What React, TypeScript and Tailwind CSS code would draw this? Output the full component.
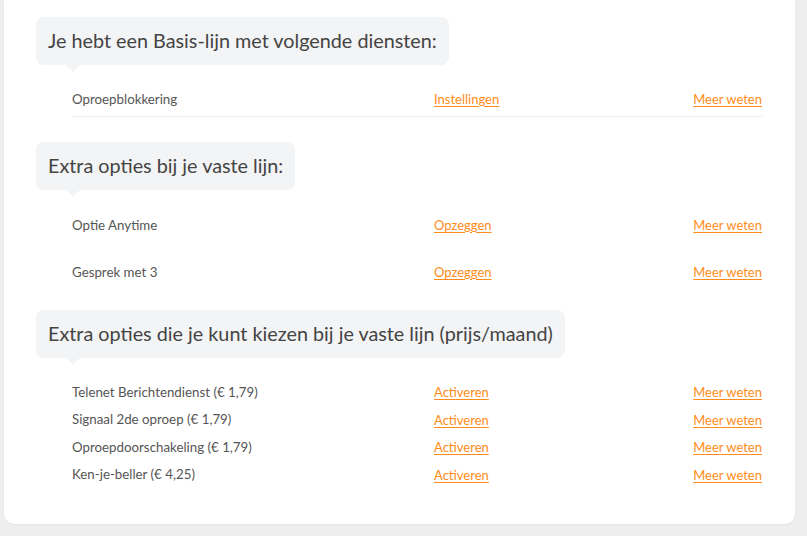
import React from 'react';

type Row = { label: string; action: string };

const basis: Row[] = [{ label: 'Oproepblokkering', action: 'Instellingen' }];
const extra: Row[] = [
  { label: 'Optie Anytime', action: 'Opzeggen' },
  { label: 'Gesprek met 3', action: 'Opzeggen' },
];
const kiezen: Row[] = [
  { label: 'Telenet Berichtendienst (€ 1,79)', action: 'Activeren' },
  { label: 'Signaal 2de oproep (€ 1,79)', action: 'Activeren' },
  { label: 'Oproepdoorschakeling (€ 1,79)', action: 'Activeren' },
  { label: 'Ken-je-beller (€ 4,25)', action: 'Activeren' },
];

const Bubble: React.FC<{ children: React.ReactNode }> = ({ children }) => (
  <div className="relative bg-[#f3f4f5] rounded-[8px] h-12 px-3 flex items-center">
    <h2 className="text-[19.8px] leading-none text-[#444]">{children}</h2>
    {/* tail */}
    <div className="absolute left-[30px] -bottom-[7px] w-0 h-0 border-l-[7px] border-r-[7px] border-t-[7px] border-l-transparent border-r-transparent border-t-[#f3f4f5]" />
  </div>
);

const OptionRow: React.FC<{ row: Row; h: string; border?: boolean }> = ({ row, h, border }) => (
  <div className={`grid grid-cols-[362px_1fr_auto] items-center ${h} ${border ? 'border-b border-[#eeeeee]' : ''}`}>
    <span className="text-[13.3px] text-[#555]">{row.label}</span>
    <a href="#" className="text-[13px] text-[#ff8c1a] underline underline-offset-2 justify-self-start">{row.action}</a>
    <a href="#" className="text-[13px] text-[#ff8c1a] underline underline-offset-2">Meer weten</a>
  </div>
);

export default function App() {
  return (
    <div className="min-h-[536px] bg-[#eeeeee] pl-1 pr-3" style={{ fontFamily: 'Lato, "Noto Sans", sans-serif' }}>
      <div className="bg-white rounded-b-[10px] pt-[17px] pb-[35px] pl-8 pr-[33px] shadow-[0_1px_2px_rgba(0,0,0,0.05)]">
        <section>
          <div className="flex"><Bubble>Je hebt een Basis-lijn met volgende diensten:</Bubble></div>
          <div className="ml-9 mt-[18px]">
            {basis.map(r => <OptionRow key={r.label} row={r} h="h-[34px]" border />)}
          </div>
        </section>

        <section className="mt-[25px]">
          <div className="flex"><Bubble>Extra opties bij je vaste lijn:</Bubble></div>
          <div className="ml-9 mt-[12px]">
            {extra.map(r => <OptionRow key={r.label} row={r} h="h-[47px]" />)}
          </div>
        </section>

        <section className="mt-[14px]">
          <div className="flex"><Bubble>Extra opties die je kunt kiezen bij je vaste lijn (prijs/maand)</Bubble></div>
          <div className="ml-9 mt-[21px]">
            {kiezen.map(r => <OptionRow key={r.label} row={r} h="h-[27.5px]" />)}
          </div>
        </section>
      </div>
    </div>
  );
}
